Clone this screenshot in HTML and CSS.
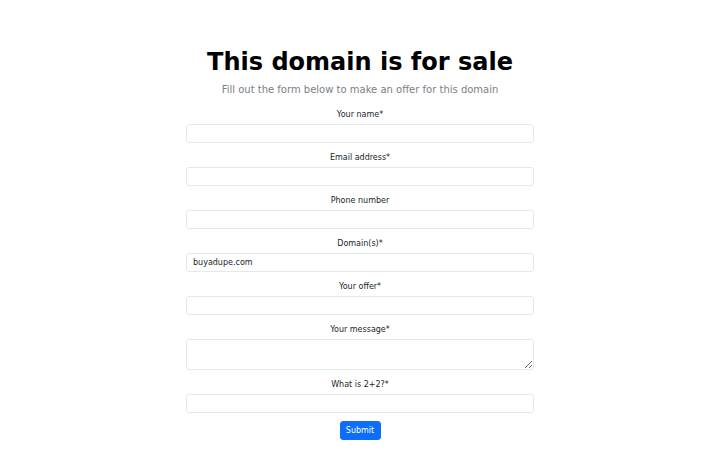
FILE: index.html
```html
<!DOCTYPE html>
<html lang="en">
<head>
<meta charset="utf-8">
<title>This domain is for sale</title>
<link rel="stylesheet" href="styles.css">
</head>
<body>
<main class="page">
  <h1 class="title">This domain is for sale</h1>
  <p class="lead">Fill out the form below to make an offer for this domain</p>
  <form class="offer-form">
    <div class="field">
      <label class="label" for="name">Your name*</label>
      <input class="control" id="name" type="text">
    </div>
    <div class="field">
      <label class="label" for="email">Email address*</label>
      <input class="control" id="email" type="email">
    </div>
    <div class="field">
      <label class="label" for="phone">Phone number</label>
      <input class="control" id="phone" type="text">
    </div>
    <div class="field">
      <label class="label" for="domain">Domain(s)*</label>
      <input class="control" id="domain" type="text" value="buyadupe.com">
    </div>
    <div class="field">
      <label class="label" for="offer">Your offer*</label>
      <input class="control" id="offer" type="text">
    </div>
    <div class="field">
      <label class="label" for="message">Your message*</label>
      <textarea class="control textarea" id="message" rows="2"></textarea>
    </div>
    <div class="field">
      <label class="label" for="captcha">What is 2+2?*</label>
      <input class="control" id="captcha" type="text">
    </div>
    <div class="actions">
      <button class="submit" type="button">Submit</button>
    </div>
  </form>
</main>
</body>
</html>
```

FILE: styles.css
```css
* {
  box-sizing: border-box;
}

html, body {
  margin: 0;
  padding: 0;
  background: #ffffff;
}

body {
  font-family: "DejaVu Sans", sans-serif;
  color: #212529;
}

.page {
  width: 348px;
  margin: 0 auto;
  padding-top: 48px;
  display: flex;
  flex-direction: column;
  align-items: stretch;
}

.title {
  margin: 0;
  font-size: 24px;
  line-height: 28.8px;
  font-weight: 700;
  text-align: center;
  color: #000000;
}

.lead {
  margin: 5.5px 0 0;
  font-size: 10px;
  line-height: 15px;
  font-weight: 400;
  color: #7a8086;
  text-align: center;
  white-space: nowrap;
}

.offer-form {
  margin-top: 10.5px;
  display: flex;
  flex-direction: column;
}

.field {
  display: flex;
  flex-direction: column;
  margin-bottom: 8px;
}

.label {
  display: block;
  font-size: 8px;
  line-height: 12px;
  padding-top: 1px;
  margin-bottom: 3px;
  text-align: center;
  color: #212529;
}

.control {
  display: block;
  width: 100%;
  height: 19px;
  padding: 3px 6px;
  font-family: "DejaVu Sans", sans-serif;
  font-size: 8px;
  line-height: 12px;
  color: #212529;
  background: #ffffff;
  border: 1px solid #e6e9ec;
  border-radius: 3px;
  outline: none;
}

.textarea {
  height: 31px;
  resize: vertical;
}

.actions {
  display: flex;
  justify-content: center;
}

.submit {
  width: 41px;
  height: 19px;
  padding: 1px 0 0;
  font-family: "DejaVu Sans", sans-serif;
  font-size: 8px;
  line-height: 12px;
  color: #ffffff;
  background: #0d6efd;
  border: 1px solid #0d6efd;
  border-radius: 3px;
}
```
